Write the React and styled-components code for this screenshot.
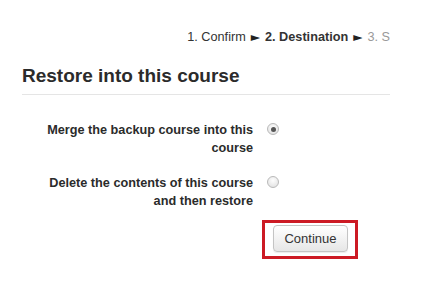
import { Fragment } from 'react';
import styled, { createGlobalStyle } from 'styled-components';

const GlobalStyle = createGlobalStyle`
  body {
    margin: 0;
    background: #fff;
    font-family: "Liberation Sans", Arial, sans-serif;
    color: #333;
  }
`;

const Page = styled.div`
  width: 368px;
  padding: 28px 0 0 22px;
`;

const Progress = styled.div`
  font-size: 12.7px;
  line-height: 18px;
  white-space: nowrap;
  text-align: right;
  color: #333;
`;

const Step = styled.span`
  font-weight: ${(p) => (p.$current ? 'bold' : 'normal')};
  color: ${(p) => (p.$future ? '#999' : '#333')};
`;

const Arrow = styled.span`
  display: inline-block;
  font-family: "DejaVu Sans", sans-serif;
  font-size: 12px;
  margin: 0 5px;
  color: #222;
`;

const Heading = styled.h2`
  margin: 19px 0 0;
  padding-bottom: 7px;
  border-bottom: 1px solid #e5e5e5;
  font-size: 19px;
  line-height: 22px;
  font-weight: bold;
  color: #2b2b2b;
`;

const Fields = styled.div`
  display: grid;
  grid-template-columns: 231px 12px;
  column-gap: 14px;
  row-gap: 17px;
  margin-top: 26px;
`;

const Label = styled.label`
  justify-self: end;
  width: 210px;
  text-align: right;
  font-size: 12.7px;
  line-height: 18px;
  font-weight: bold;
  color: #2b2b2b;
`;

const Radio = styled.span`
  margin-top: 2px;
  width: 12px;
  height: 12px;
  box-sizing: border-box;
  border-radius: 50%;
  border: 1px solid #b9b9b9;
  background: radial-gradient(circle at 50% 35%, #fdfdfd 0%, #e4e4e4 80%);
  display: flex;
  align-items: center;
  justify-content: center;
  &::after {
    content: '';
    width: 5px;
    height: 5px;
    border-radius: 50%;
    background: ${(p) => (p.$checked ? '#555' : 'transparent')};
  }
`;

const ButtonRow = styled.div`
  display: flex;
  padding-left: 240px;
  margin-top: 10px;
`;

const Highlight = styled.div`
  border: 3px solid #cc1a24;
  padding: 2px 7px 4px 8px;
`;

const Button = styled.button`
  width: 75px;
  height: 27px;
  border: 1px solid #c4c4c4;
  border-radius: 4px;
  background: linear-gradient(#ffffff, #e6e6e6);
  box-shadow: 0 1px 1px rgba(0, 0, 0, 0.08);
  font-family: "Liberation Sans", Arial, sans-serif;
  font-size: 13px;
  color: #333;
  padding: 0;
`;

const options = [
  { label: 'Merge the backup course into this course', checked: true },
  { label: 'Delete the contents of this course and then restore', checked: false },
];

export default function App() {
  return (
    <>
      <GlobalStyle />
      <Page>
        <Progress>
          <Step>1. Confirm</Step>
          <Arrow>►</Arrow>
          <Step $current>2. Destination</Step>
          <Arrow>►</Arrow>
          <Step $future>3. S</Step>
        </Progress>
        <Heading>Restore into this course</Heading>
        <Fields>
          {options.map((o) => (
            <Fragment key={o.label}>
              <Label>{o.label}</Label>
              <Radio $checked={o.checked} />
            </Fragment>
          ))}
        </Fields>
        <ButtonRow>
          <Highlight>
            <Button>Continue</Button>
          </Highlight>
        </ButtonRow>
      </Page>
    </>
  );
}
